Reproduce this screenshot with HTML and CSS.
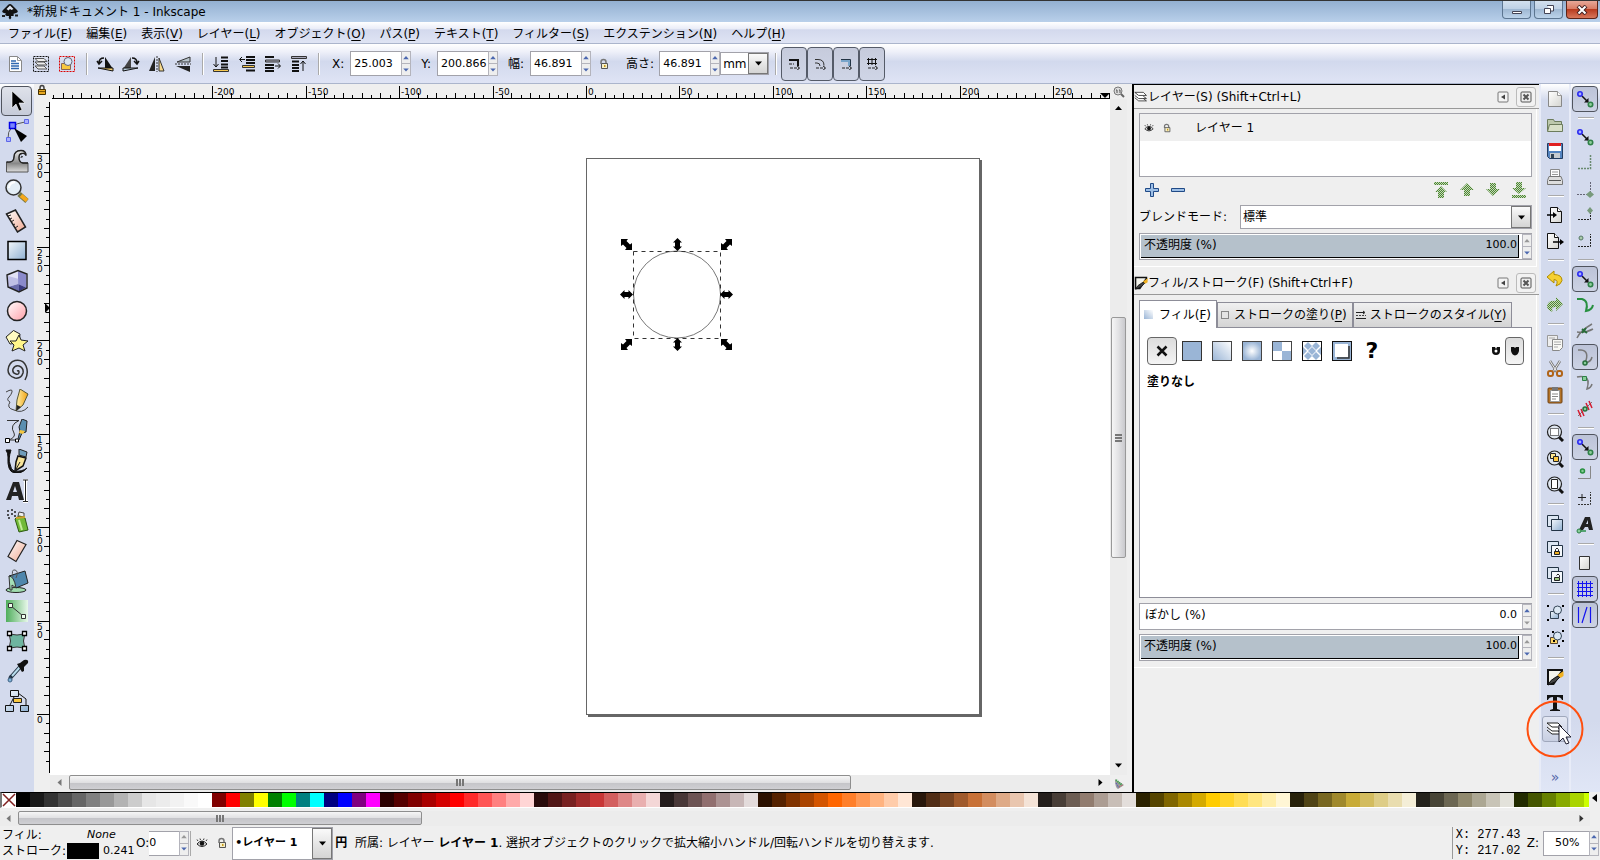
FILE: index.html
```html
<!DOCTYPE html>
<html lang="ja">
<head>
  <meta charset="UTF-8">
  <meta name="viewport" content="width=device-width, initial-scale=1.0">
  <title>*新規ドキュメント 1 - Inkscape</title>
  <link rel="stylesheet" href="styles.css">
</head>
<body>
  <!-- Shared icons and gradients -->
  <svg class="defs" width="0" height="0" aria-hidden="true">
    <defs>
      <linearGradient id="g-blue" x1="0" y1="0" x2="1" y2="1"><stop offset="0" stop-color="#f4f8fc"/><stop offset="1" stop-color="#8fb0d2"/></linearGradient>
      <linearGradient id="g-fade" x1="0" y1="1" x2="1" y2="0"><stop offset="0" stop-color="#9ab5d6"/><stop offset="1" stop-color="#fff"/></linearGradient>
      <radialGradient id="g-radial"><stop offset="0" stop-color="#fff"/><stop offset="1" stop-color="#9ab5d6"/></radialGradient>
      <linearGradient id="g-pink" x1="0" y1="0" x2="1" y2="1"><stop offset="0" stop-color="#fff"/><stop offset="1" stop-color="#ff9fa8"/></linearGradient>
      <linearGradient id="g-skin" x1="0" y1="0" x2="1" y2="1"><stop offset="0" stop-color="#fff"/><stop offset="1" stop-color="#f0a890"/></linearGradient>
      <linearGradient id="g-gray" x1="0" y1="0" x2="0" y2="1"><stop offset="0" stop-color="#eee"/><stop offset=".6" stop-color="#888"/><stop offset="1" stop-color="#ddd"/></linearGradient>
      <linearGradient id="g-green" x1="0" y1="0" x2="1" y2="0"><stop offset="0" stop-color="#4fae5c"/><stop offset="1" stop-color="#e8f8ea"/></linearGradient>
      <linearGradient id="g-page" x1="0" y1="0" x2="1" y2="1"><stop offset="0" stop-color="#fff"/><stop offset="1" stop-color="#d4d4d0"/></linearGradient>
      <linearGradient id="g-gold" x1="0" y1="0" x2="1" y2="0"><stop offset="0" stop-color="#fff3b0"/><stop offset="1" stop-color="#f0a010"/></linearGradient>
      <pattern id="p-check" width="2" height="2" patternUnits="userSpaceOnUse"><path d="M0 0h1v1H0zM1 1h1v1H1z" fill="#4e8434"/><path d="M1 0h1v1H1zM0 1h1v1H0z" fill="#c4dab8"/></pattern>
    </defs>
    <symbol id="i-eye" viewBox="0 0 12 12"><path d="M1 7q5-6 10 0q-5 5-10 0z" fill="#ddd" stroke="#222"/><circle cx="6" cy="6.500" r="2.200" fill="#111"/><path d="M2 4L1 2.500M4.500 3L4 1.500M7.500 3L8 1.500M10 4l1-1.500" stroke="#333"/></symbol>
    <symbol id="i-unlock" viewBox="0 0 12 12"><path d="M3 6V4q0-2.500 2.500-2.500T8 4v2" fill="none" stroke="#777" stroke-width="1.500"/><path d="M3.500 5.500h6v5h-6z" fill="#f6efc8" stroke="#555"/><path d="M6 7h1.500v2H6z" fill="#c79a18"/></symbol>
    <symbol id="i-lock" viewBox="0 0 12 12"><path d="M4 6V4q0-2.500 2-2.500T8 4v2" fill="none" stroke="#444" stroke-width="1.500"/><path d="M2.500 5.500h7v5h-7z" fill="#e8a820" stroke="#443000"/><path d="M3 7.500h6" stroke="#7c5500"/></symbol>
    <symbol id="i-close" viewBox="0 0 12 12"><rect x="1" y="1" width="10" height="10" rx="1" fill="#eee" stroke="#555"/><path d="M3.500 3.500l5 5m0-5l-5 5" stroke="#555" stroke-width="2"/></symbol>
    <symbol id="i-iconify" viewBox="0 0 12 12"><rect x="1" y="1" width="10" height="10" rx="1" fill="#f4f4f4" stroke="#777"/><path d="M8 3.500v5L4 6z" fill="#444"/></symbol>
    <symbol id="i-snap" viewBox="0 0 18 18"><path d="M6 6l6 6" stroke="#111" stroke-width="1.500"/><path d="M12.500 12.500H8l4.500-4.500z" fill="#111"/><circle cx="4" cy="4" r="2.200" fill="#a8b0ff" stroke="#2a2af0" stroke-width="1.600"/><circle cx="14.500" cy="14.500" r="2.200" fill="#8fcf9c" stroke="#2f8048" stroke-width="1.600"/></symbol>
    <symbol id="i-layers" viewBox="0 0 18 18"><path d="M1 3h11l4 3v7H6z" fill="#eee"/><path d="M1 10l5 4h10l-4-3M1 7l5 4h10l-4-3M1 3h11l4 4H6z" fill="#fff" stroke="#222"/></symbol>
    <symbol id="i-fillpen" viewBox="0 0 18 18"><path d="M1 1h16v3L8 17H1z" fill="#111"/><path d="M3 3h12L6 15H3z" fill="#f4f4ec"/><path d="M16 7L9 14l-7 3q2-5 8-8z" fill="#444" stroke="#111"/><path d="M17.500 3v5l-3 2-3-3z" fill="#f0b020"/></symbol>
    <symbol id="i-zoom" viewBox="0 0 18 18"><path d="M12 12l5 5" stroke="#111" stroke-width="3"/><circle cx="8.500" cy="8" r="7" fill="#dfe6ef" stroke="#222" stroke-width="1.200"/></symbol>
    <symbol id="i-up" viewBox="0 0 7 5"><path d="M3.500 0L7 4H0z"/></symbol>
    <symbol id="i-down" viewBox="0 0 7 5"><path d="M3.500 4.500L0 .5h7z"/></symbol>
  </svg>

  <header class="titlebar">
    <svg class="logo" width="18" height="16" viewBox="0 0 18 16"><path d="M9 0q1 0 2 1l5 5q2 2-1 3l-3 1q2 1 0 2h-2q1 2-1 3.500Q7 14 8 12H6q-3-1-1-2.500L3 9Q0 8 2 6l5-5q1-1 2-1z" fill="#111"/><path d="M9 1.500L12.500 5l-2 1-1.500-1-1.500 1.500-2-1.500z" fill="#dfe6f0"/><path d="M1 12h3M14 11.500h3" stroke="#222" stroke-width="2"/></svg>
    <h1>*新規ドキュメント 1 - Inkscape</h1>
    <div class="window-buttons">
      <button class="win" aria-label="最小化"><svg width="12" height="10"><path d="M1.500 6.500h9v2h-9z" fill="#fff" stroke="#445"/></svg></button>
      <button class="win" aria-label="元に戻す"><svg width="12" height="11"><path d="M4 1.500h6.500V7H8" fill="#fff" stroke="#445"/><path d="M1.500 4.500h6v5h-6z" fill="#fff" stroke="#445"/></svg></button>
      <button class="win win-close" aria-label="閉じる"><svg width="12" height="10"><path d="M2 1l8 8m0-8L2 9" stroke="#422" stroke-width="4"/><path d="M2.500 1.500l7 7m0-7l-7 7" stroke="#fff" stroke-width="2"/></svg></button>
    </div>
  </header>

  <nav class="menubar">
    <button>ファイル(<u>F</u>)</button>
    <button>編集(<u>E</u>)</button>
    <button>表示(<u>V</u>)</button>
    <button>レイヤー(<u>L</u>)</button>
    <button>オブジェクト(<u>O</u>)</button>
    <button>パス(<u>P</u>)</button>
    <button>テキスト(<u>T</u>)</button>
    <button>フィルター(<u>S</u>)</button>
    <button>エクステンション(<u>N</u>)</button>
    <button>ヘルプ(<u>H</u>)</button>
  </nav>

  <!-- Select tool options -->
  <div class="options">
    <button class="opt" aria-label="すべて選択"><svg width="18" height="18"><path d="M3.500 1.500h8l4 4v11h-12z" fill="#fff" stroke="#888"/><path d="M11.500 1.500v4h4" fill="none" stroke="#999"/><path d="M5 6h5M5 8.500h8M5 11h8M5 13.500h8" stroke="#2f68b0" stroke-width="1.500"/></svg></button>
    <button class="opt" aria-label="全レイヤー選択"><svg width="18" height="18"><rect x="1.500" y="1.500" width="15" height="15" fill="none" stroke="#111" stroke-dasharray="2 1"/><path d="M3 11l3 3h9l-3-3zM3 7l3 3h9l-3-3zM3 3.500l3 3h9l-3-3z" fill="#eee" stroke="#555"/></svg></button>
    <button class="opt" aria-label="選択解除"><svg width="18" height="18"><rect x="1.500" y="1.500" width="15" height="15" fill="none" stroke="#d00" stroke-dasharray="2 1"/><path d="M3.500 8.500h9v6h-9z" fill="#f8c840" stroke="#865"/><circle cx="10" cy="6.500" r="4" fill="#dbe6f4" stroke="#667"/></svg></button>
    <span class="vsep"></span>
    <button class="opt" aria-label="左に回転"><svg width="18" height="18"><path d="M9 2v11l8 1z" fill="#111"/><path d="M2 13h15v3z" fill="#f6d070" stroke="#111"/><path d="M8 3Q3 3 3 8M1 6l2 3 3-3" fill="none" stroke="#111" stroke-width="1.500"/></svg></button>
    <button class="opt" aria-label="右に回転"><svg width="18" height="18"><path d="M9 2v11l-8 1z" fill="#444"/><path d="M16 13H1v3z" fill="#b8ccd8" stroke="#111"/><path d="M10 3q5 0 5 5M12 6l3 3 2-3" fill="none" stroke="#111" stroke-width="1.500"/></svg></button>
    <button class="opt" aria-label="水平に反転"><svg width="18" height="18"><path d="M7 2v14H1z" fill="#222"/><path d="M11 3v13h5z" fill="#f6d88a" stroke="#333"/><path d="M9 1v16" stroke="#333" stroke-dasharray="2 1"/></svg></button>
    <button class="opt" aria-label="垂直に反転"><svg width="18" height="18"><path d="M16 2v5H3z" fill="#b8c4cc" stroke="#333"/><path d="M16 17v-6H2z" fill="#222"/><path d="M1 9h16" stroke="#333" stroke-dasharray="2 1"/></svg></button>
    <span class="vsep"></span>
    <button class="opt" aria-label="最背面へ"><svg width="18" height="18"><path d="M9 2.500h7M9 6h7M9 9.500h7M9 12.500h7" stroke="#111" stroke-width="2"/><path d="M1.500 14.500h15v2h-15z" fill="#f6c850" stroke="#333"/><path d="M4 2v10M1.500 9L4 12l2.500-3" fill="none" stroke="#111"/></svg></button>
    <button class="opt" aria-label="背面へ"><svg width="18" height="18"><path d="M8 2h9M8 5h9M8 8h9M8 15.500h9" stroke="#111" stroke-width="2"/><path d="M4.500 10.500h12v2h-12z" fill="#f6c850" stroke="#333"/><path d="M7 4.500H2M4 2L1.500 4.500 4 7" fill="none" stroke="#111"/></svg></button>
    <button class="opt" aria-label="前面へ"><svg width="18" height="18"><path d="M1 2h9M1 10h9M1 13h9M1 16h9" stroke="#111" stroke-width="2"/><path d="M1.500 5h14v2h-14z" fill="#aab" stroke="#333"/><path d="M11 11h5M14 8.500l2.500 2.500-2.500 2.500" fill="none" stroke="#111"/></svg></button>
    <button class="opt" aria-label="最前面へ"><svg width="18" height="18"><path d="M1.500 1.500h15v2h-15z" fill="#aab" stroke="#333"/><path d="M2 6.500h7M2 10h7M2 13h7M2 16h7" stroke="#111" stroke-width="2"/><path d="M13 16V6M10.500 9L13 6l2.500 3" fill="none" stroke="#111"/></svg></button>
    <span class="vsep"></span>
    <label class="lx" for="x">X:</label>
    <span class="spin"><input id="x" value="25.003"><span class="steps"><button aria-label="増"><svg><use href="#i-up"/></svg></button><button aria-label="減"><svg><use href="#i-down"/></svg></button></span></span>
    <label class="ly" for="y">Y:</label>
    <span class="spin"><input id="y" value="200.866"><span class="steps"><button aria-label="増"><svg><use href="#i-up"/></svg></button><button aria-label="減"><svg><use href="#i-down"/></svg></button></span></span>
    <label class="lw" for="w">幅:</label>
    <span class="spin"><input id="w" value="46.891"><span class="steps"><button aria-label="増"><svg><use href="#i-up"/></svg></button><button aria-label="減"><svg><use href="#i-down"/></svg></button></span></span>
    <button class="opt" aria-label="縦横比をロック"><svg width="12" height="12"><use href="#i-unlock"/></svg></button>
    <label class="lh" for="h">高さ:</label>
    <span class="spin"><input id="h" value="46.891"><span class="steps"><button aria-label="増"><svg><use href="#i-up"/></svg></button><button aria-label="減"><svg><use href="#i-down"/></svg></button></span></span>
    <span class="combo unit"><select aria-label="単位"><option>mm</option></select><span class="drop"><svg width="7" height="5"><use href="#i-down"/></svg></span></span>
    <span class="vsep"></span>
    <div class="affect">
      <button aria-label="ストローク幅を拡大縮小"><svg width="12" height="12"><path d="M1 2h9v6" fill="none" stroke="#111" stroke-width="2"/><path d="M1 6h5M2 10h9M9 8l3 2-3 2" fill="none" stroke="#222" stroke-dasharray="3 1"/></svg></button>
      <button aria-label="角の半径を拡大縮小"><svg width="12" height="12"><path d="M1 1.500h3q6 0 6 6M1 5h2q3 0 3 3" fill="none" stroke="#333"/><path d="M2 10h9M9 8l3 2-3 2" fill="none" stroke="#222" stroke-dasharray="3 1"/></svg></button>
      <button aria-label="グラデーションを変形"><svg width="12" height="12"><path d="M1 1.500h9.500V8" fill="none" stroke="#234"/><path d="M1 3h8v5" fill="none" stroke="#79a5ca" stroke-width="2"/><path d="M2 10h9M9 8l3 2-3 2" fill="none" stroke="#222" stroke-dasharray="3 1"/></svg></button>
      <button aria-label="パターンを変形"><svg width="12" height="12"><path d="M1 1.500h10M1 5.500h10M2.500 0v7M6 0v7M9.500 0v7" stroke="#111"/><path d="M2 10h9M9 8l3 2-3 2" fill="none" stroke="#222" stroke-dasharray="3 1"/></svg></button>
    </div>
  </div>

  <main class="workspace">
    <div class="toolbox">
      <button class="tool on" aria-label="選択"><svg width="24" height="24"><path d="M7 2v17l4-4 3 7 3-1-3-7h6z" fill="#000" stroke="#fff" stroke-width=".6"/></svg></button>
      <button class="tool" aria-label="ノード"><svg width="24" height="24"><path d="M3 20Q2 5 20 3" fill="none" stroke="#555"/><path d="M1.500 18.500h4v4h-4zM19.500.5h4v4h-4z" fill="#aab0ff" stroke="#5c66e8"/><path d="M4.500 3.500h6v6h-6z" fill="#7a84ff" stroke="#0000e8" stroke-width="1.500"/><path d="M9 9l13 8-6 6z" fill="#000"/></svg></button>
      <button class="tool" aria-label="微調整"><svg width="24" height="24"><path d="M1.500 23V13Q9 14 9 8q0-6.500 7-6.500 5 0 5 5-1-3-4-2-3 0-3 4 0 5 4 5.500h5V23z" fill="url(#g-gray)" stroke="#555"/><path d="M1.500 13Q9 14 9 8q0-6.500 7-6.500 5 0 5 5-1-3-4-2-3 0-3 4 0 5 4 5.500h5" fill="none" stroke="#222" stroke-width="1.300"/><path d="M18 8q-2-2-2 1" fill="none" stroke="#222"/></svg></button>
      <button class="tool" aria-label="ズーム"><svg width="24" height="24"><path d="M14 15l8 7" stroke="#774" stroke-width="5"/><path d="M16 16.500l6 5" stroke="#f5a81c" stroke-width="4"/><circle cx="8.500" cy="8.500" r="7.500" fill="#e4eef6" stroke="#333" stroke-width="1.500"/><path d="M4 9q0-5 6-6" fill="none" stroke="#fff" stroke-width="2"/></svg></button>
      <button class="tool" aria-label="計測"><svg width="24" height="24"><path d="M1.500 5l9-4 10 17-8 5z" fill="url(#g-skin)" stroke="#222" stroke-width="1.500"/><path d="M3 7l3-1M5 10l2-1M6 13l3-2M8 16l2-1M10 19l3-2" stroke="#222"/></svg></button>
      <button class="tool" aria-label="矩形"><svg width="24" height="24"><rect x="3" y="2.500" width="18" height="18" fill="url(#g-blue)" stroke="#000" stroke-width="1.500"/></svg></button>
      <button class="tool" aria-label="3Dボックス"><svg width="24" height="24"><path d="M2 6l11-4.500L22 5v14l-8 4L3 18z" fill="#c9c9ea"/><path d="M13 2v13l8 3.500V5z" fill="#8a8acb"/><path d="M3 18l10-3 8 3.500-7 4z" fill="#393a80"/><path d="M2 6l11-4.500V15L3 18z" fill="#e2e2f6"/><path d="M3 7l11 3v12L3 18z" fill="#9c9cd6" opacity=".5"/><path d="M2 6l11-4.500L22 5v14l-8 4L3 18z" fill="none" stroke="#222" stroke-width="1.400"/></svg></button>
      <button class="tool" aria-label="円"><svg width="24" height="24"><circle cx="12" cy="12" r="9.500" fill="url(#g-pink)" stroke="#222" stroke-width="1.500"/></svg></button>
      <button class="tool" aria-label="星形"><svg width="24" height="24"><path d="M8.500 1.500L15 5l-1 9-9 1-4-7z" fill="#fffbc0" stroke="#222"/><path d="M14 6l2 5 7 1-5 4 2 6-6-3-7 3 2-6-4-4h6z" fill="#fff68a" stroke="#222"/></svg></button>
      <button class="tool" aria-label="螺旋"><svg width="24" height="24"><path d="M12 12q2-1 2 1 0 3-3 2-4-1-3-5 2-4 6-3 5 2 4 7-2 6-8 5-7-2-7-8Q4 3 10 1.500 18 0 21 7q3 7-1 14" fill="none" stroke="#333" stroke-width="1.500"/></svg></button>
      <button class="tool" aria-label="鉛筆"><svg width="24" height="24"><path d="M1 3q7-4 6 0-1 3-3 5-3 3 1 5-4 6 4 8 8 4 14-3" fill="none" stroke="#444"/><path d="M15 0l8 5-5 11-7 6 1-11z" fill="url(#g-gold)" stroke="#553"/><path d="M12 16l4 2-5 4z" fill="#222"/></svg></button>
      <button class="tool" aria-label="ペン"><svg width="24" height="24"><path d="M2 1.500h12Q4 6 9 14q2 4-5 7h9" fill="none" stroke="#333"/><path d="M.5 19.500h4v4h-4zM10.500 20h3v3h-3z" fill="#fff" stroke="#000"/><path d="M17 0l5 2-1 11-4 1-3 7-1-1 2-8-1-4z" fill="#5b8fb0" stroke="#222"/><path d="M15 11l5 1-2 3-4-1z" fill="#f5c640"/></svg></button>
      <button class="tool" aria-label="カリグラフィ"><svg width="24" height="24"><path d="M1 1h5q-3 9-1 14 1 6 4 7 8 1 13-3-5 6-13 5Q2 22 3 8 3 4 1 1z" fill="#111" stroke="#111"/><path d="M14 0l8 3-1 5-7-2z" fill="#6f9cba" stroke="#222"/><path d="M13 7l8 2-3 8-8 5 1-9z" fill="#f7e49a" stroke="#111" stroke-width="1.500"/><path d="M15 13l-5 9" stroke="#222"/></svg></button>
      <button class="tool" aria-label="テキスト"><svg width="24" height="24"><path d="M1 21L8 3h6l5 18h-5l-1-4H7l-1 4zm7-8h4l-2-6z" fill="#222" fill-rule="evenodd"/><path d="M18 1h5M20.500 1v21M18 22.500h5" stroke="#fff" stroke-width="3"/><path d="M18 1h5M20.500 1v21M18 22.500h5" stroke="#222"/></svg></button>
      <button class="tool" aria-label="スプレー"><svg width="24" height="24"><path d="M2 2h2M6 1h2M9 3h2M2 6h2M6 5h2M9 7h2M3 9h2" stroke="#222" stroke-width="1.500"/><path d="M13 7l1-4 5 1v4z" fill="#eee" stroke="#444"/><path d="M10 10q4-5 10-1l3 12-9 2z" fill="#72ba38" stroke="#2c5a10"/><path d="M14 11l3 10" stroke="#c6ec9a" stroke-width="2"/><path d="M11 9l9-1" stroke="#d0a030" stroke-width="2"/></svg></button>
      <button class="tool" aria-label="消しゴム"><svg width="24" height="24"><path d="M12 1.500l9 4-10 17-8-5z" fill="url(#g-skin)" stroke="#222" stroke-width="1.200"/></svg></button>
      <button class="tool" aria-label="バケツ"><svg width="24" height="24"><ellipse cx="11" cy="21" rx="10" ry="2.500" fill="#9fdcae" stroke="#222"/><path d="M4 7l16-5 3 12-12 5z" fill="#4f86ac" stroke="#222"/><path d="M4 7q5 0 7 12l-4-3v5H5z" fill="#a4dfb6" stroke="#333"/><path d="M8 8q-2-8 2-7t1 8" fill="none" stroke="#555"/></svg></button>
      <button class="tool" aria-label="グラデーション"><svg width="24" height="24"><rect x="1" y="1" width="22" height="22" fill="url(#g-green)"/><path d="M6 7l12 10" stroke="#333"/><path d="M3.500 4.500h4v4h-4zM16.500 15.500h4v4h-4z" fill="#efe" stroke="#333"/></svg></button>
      <button class="tool" aria-label="メッシュ"><svg width="24" height="24"><path d="M4 4q8 4 16 0-3 8 0 16-8-4-16 0Q7 12 4 4z" fill="#6eb5a0" stroke="#333"/><path d="M2.500 2.500h4v4h-4zM17.500 2.500h4v4h-4zM2.500 17.500h4v4h-4zM17.500 17.500h4v4h-4z" fill="#fff" stroke="#000" stroke-width="1.300"/></svg></button>
      <button class="tool" aria-label="スポイト"><svg width="24" height="24"><path d="M15 8L7 17q-2 1-2 5" fill="none" stroke="#234" stroke-width="4"/><path d="M15 8L7 17" stroke="#b8dced" stroke-width="2"/><path d="M12 5l3-1 4-3q5-1 4 3l-4 4v4l-2 1z" fill="#111"/><circle cx="5" cy="21" r="2" fill="#7fb4d8" stroke="#468"/></svg></button>
      <button class="tool" aria-label="コネクター"><svg width="24" height="24"><path d="M9 8L4 18M13 4l8 6v8" fill="none" stroke="#111"/><path d="M5.500 1.500h8v6h-8zM.500 16.500h8v6h-8zM15.500 16.500h8v6h-8z" fill="url(#g-blue)" stroke="#111"/><path d="M8.500 9.500h8v4h-8z" fill="#f8c840" stroke="#222"/></svg></button>
    </div>

    <section class="view">
      <span class="ruler-lock"><svg width="12" height="12"><use href="#i-lock"/></svg></span>
      <svg class="ruler" id="hruler"></svg>
      <span class="corner"><svg width="12" height="12"><circle cx="5" cy="5" r="4" fill="#ddd" stroke="#777"/><path d="M8 8l3 3" stroke="#666" stroke-width="2"/><path d="M3 4h1v3M6 4h1v3" stroke="#555" fill="none"/></svg></span>
      <svg class="ruler" id="vruler"></svg>
      <svg class="canvas" id="canvas">
        <path d="M930 61h2v557H538v-2h392z" fill="#666"/>
        <rect x="536.500" y="59.500" width="393" height="556" fill="#fff" stroke="#666"/>
        <circle cx="627" cy="195.500" r="43.500" fill="none" stroke="#777"/>
        <rect x="583.500" y="152.500" width="87" height="87" fill="none" stroke="#333" stroke-dasharray="4 4"/>
      </svg>
      <div class="vscroll">
        <svg class="tip" width="7" height="5"><use href="#i-up"/></svg>
        <div class="track"><span class="thumb"><i></i><i></i><i></i></span></div>
        <svg class="tip" width="7" height="5"><use href="#i-down"/></svg>
      </div>
      <span></span>
      <div class="hscroll">
        <svg width="5" height="7"><path d="M4.500 0v7L.5 3.500z" fill="#777"/></svg>
        <div class="track"><span class="thumb"><i></i><i></i><i></i></span></div>
        <svg width="5" height="7"><path d="M.5 0v7l4-3.500z"/></svg>
      </div>
      <span class="corner"><svg width="12" height="12"><path d="M2 1l9 6-6 4q-3-1-3-10z" fill="#999"/><path d="M3 2l6 5" stroke="#3a4" stroke-width="2" stroke-dasharray="1 1"/><path d="M3 5l3 5" stroke="#44c" stroke-dasharray="1 1"/><path d="M6 9l4-2" stroke="#c55" stroke-dasharray="1 1"/></svg></span>
    </section>

    <aside class="dock">
      <section class="dialog">
        <header>
          <svg width="14" height="14"><use href="#i-layers"/></svg>
          <h2>レイヤー(S) (Shift+Ctrl+L)</h2>
          <button class="iconify" aria-label="アイコン化"><svg width="12" height="12"><use href="#i-iconify"/></svg></button>
          <button class="close" aria-label="閉じる"><svg width="12" height="12"><use href="#i-close"/></svg></button>
        </header>
        <div class="dialog-body">
          <ul class="layers">
            <li><svg width="10" height="10"><use href="#i-eye"/></svg><svg width="10" height="10"><use href="#i-unlock"/></svg><span>レイヤー 1</span></li>
          </ul>
          <div class="layer-buttons">
            <button aria-label="レイヤーを追加"><svg width="16" height="16"><path d="M6.500 1.500h3v5h5v3h-5v5h-3v-5h-5v-3h5z" fill="#9dbfe6" stroke="#204a87"/></svg></button>
            <button aria-label="レイヤーを削除"><svg width="16" height="16"><path d="M1.500 6.500h13v3h-13z" fill="#9dbfe6" stroke="#204a87"/></svg></button>
            <button class="push" aria-label="最前面へ"><svg width="16" height="16"><path d="M1 0h14v3H1zM8 4l6 6h-3v6H5v-6H2z" fill="url(#p-check)"/></svg></button>
            <button aria-label="前面へ"><svg width="16" height="16"><path d="M8 1l7 7h-4v6H5V8H1z" fill="url(#p-check)"/></svg></button>
            <button aria-label="背面へ"><svg width="16" height="16"><path d="M8 14l7-7h-4V1H5v6H1z" fill="url(#p-check)"/></svg></button>
            <button aria-label="最背面へ"><svg width="16" height="16"><path d="M1 13h14v3H1zM8 12l7-6h-4V0H5v6H1z" fill="url(#p-check)"/></svg></button>
          </div>
          <div class="blend">
            <label for="blend">ブレンドモード:</label>
            <span class="combo"><select id="blend"><option>標準</option></select><span class="drop"><svg width="7" height="5"><use href="#i-down"/></svg></span></span>
          </div>
          <div class="scale full"><div class="bar"><label for="lop">不透明度 (%)</label><input id="lop" value="100.0"></div><span class="steps"><button class="off" aria-label="増"><svg><use href="#i-up"/></svg></button><button aria-label="減"><svg><use href="#i-down"/></svg></button></span></div>
        </div>
      </section>

      <section class="dialog">
        <header>
          <svg width="14" height="14"><use href="#i-fillpen"/></svg>
          <h2>フィル/ストローク(F) (Shift+Ctrl+F)</h2>
          <button class="iconify" aria-label="アイコン化"><svg width="12" height="12"><use href="#i-iconify"/></svg></button>
          <button class="close" aria-label="閉じる"><svg width="12" height="12"><use href="#i-close"/></svg></button>
        </header>
        <div class="dialog-body">
          <div class="tabs">
            <button class="tab active"><svg width="10" height="10"><rect width="9" height="9" fill="url(#g-fade)"/></svg>フィル(<u>F</u>)</button>
            <button class="tab"><svg width="10" height="10"><rect x="1.500" y="1.500" width="7" height="7" fill="#e4e4e4" stroke="#888"/></svg>ストロークの塗り(<u>P</u>)</button>
            <button class="tab"><svg width="10" height="10"><path d="M0 2.500h8M7 1l2 1.500L7 4M0 8.500h10" stroke="#222" fill="none"/><path d="M0 5.500h10" stroke="#444" stroke-dasharray="2 1"/></svg>ストロークのスタイル(<u>Y</u>)</button>
          </div>
          <div class="notebook">
            <div class="paints">
              <button class="paint on" aria-label="塗りなし"><svg width="20" height="20"><path d="M5.500 5.500l9 9m0-9l-9 9" stroke="#111" stroke-width="2.500"/></svg></button>
              <button class="paint" aria-label="単一色"><svg width="20" height="20"><rect x=".5" y=".5" width="19" height="19" fill="#9ab5d6" stroke="#333"/></svg></button>
              <button class="paint" aria-label="線形グラデーション"><svg width="20" height="20"><rect x=".5" y=".5" width="19" height="19" fill="url(#g-fade)" stroke="#444"/></svg></button>
              <button class="paint" aria-label="放射グラデーション"><svg width="20" height="20"><rect x=".5" y=".5" width="19" height="19" fill="url(#g-radial)" stroke="#444"/></svg></button>
              <button class="paint" aria-label="メッシュグラデーション"><svg width="20" height="20"><rect x=".5" y=".5" width="19" height="19" fill="#fff" stroke="#444"/><path d="M1 1h9v9H1z" fill="#9ab5d6"/><path d="M10 10h9v9h-9z" fill="#9ab5d6"/></svg></button>
              <button class="paint" aria-label="パターン"><svg width="20" height="20"><rect x=".5" y=".5" width="19" height="19" fill="#fff" stroke="#111"/><path d="M6 1l4 4-4 4-4-4zM14 1l4 4-4 4-4-4zM10 6l4 4-4 4-4-4zM6 11l4 4-4 4-4-4zM14 11l4 4-4 4-4-4zM1 6l4 4-4 4zM19 6l-4 4 4 4z" fill="#9ab5d6"/></svg></button>
              <button class="paint" aria-label="スウォッチ"><svg width="20" height="20"><rect x=".5" y=".5" width="19" height="19" fill="#9ab5d6" stroke="#111"/><path d="M5 17h12V5" fill="none" stroke="#333" stroke-width="1.500"/><rect x="3" y="3" width="13" height="13" fill="#fff"/></svg></button>
              <button class="paint unknown" aria-label="未設定">?</button>
              <button class="rule" aria-label="奇偶規則"><svg width="10" height="10"><path d="M1 1h3l1 2 1-2h3v4q0 4-4 4T1 5z" fill="#111"/><circle cx="5" cy="5" r="1.500" fill="#fff"/></svg></button>
              <button class="rule on" aria-label="非ゼロ規則"><svg width="10" height="10"><path d="M1 1h3l1 1 1-1h3v4q-1 4-4 4.500Q2 9 1 5z" fill="#111"/></svg></button>
            </div>
            <p class="none">塗りなし</p>
          </div>
          <div class="scale"><div class="bar"><label for="blur">ぼかし (%)</label><input id="blur" value="0.0"></div><span class="steps"><button aria-label="増"><svg><use href="#i-up"/></svg></button><button class="off" aria-label="減"><svg><use href="#i-down"/></svg></button></span></div>
          <div class="scale full"><div class="bar"><label for="fop">不透明度 (%)</label><input id="fop" value="100.0"></div><span class="steps"><button class="off" aria-label="増"><svg><use href="#i-up"/></svg></button><button aria-label="減"><svg><use href="#i-down"/></svg></button></span></div>
        </div>
      </section>
    </aside>

    <!-- Commands -->
    <div class="bar-v">
      <button class="cmd" aria-label="新規"><svg width="18" height="18"><path d="M2.500 1.500h9l4 4v11h-13z" fill="url(#g-page)" stroke="#888"/><path d="M11.500 1.500v4h4" fill="#fff" stroke="#999"/></svg></button>
      <button class="cmd" aria-label="開く"><svg width="18" height="18"><path d="M1.500 15V3.500h6l1 2h7v3" fill="#bcc8ac" stroke="#6c7c5c"/><path d="M1.500 15.500l2-7h13v7z" fill="#d8e0c8" stroke="#6c7c5c"/></svg></button>
      <button class="cmd" aria-label="保存"><svg width="18" height="18"><path d="M1.500 1.500h15v15h-13l-2-2z" fill="#5484c0" stroke="#223c60"/><path d="M3 1h12v8H3z" fill="#fff"/><path d="M3 1h12v3H3z" fill="#e02020"/><path d="M4 11h10v5H4z" fill="#c8ccd0"/><path d="M5 12h3v4H5z" fill="#345"/></svg></button>
      <button class="cmd" aria-label="印刷"><svg width="18" height="18"><path d="M4.500 9V1.500h9V9" fill="#fff" stroke="#888"/><path d="M6 4h6M6 6.500h6" stroke="#999"/><path d="M3 8.500h12l1.500 4v4h-15v-4z" fill="#ddd" stroke="#777"/><path d="M3 12.500h12" stroke="#555"/></svg></button>
      <hr>
      <button class="cmd" aria-label="インポート"><svg width="18" height="18"><path d="M4.500 1.500h7l4 4v11h-11z" fill="url(#g-page)" stroke="#111"/><path d="M11.500 1.500v4h4" fill="#fff" stroke="#111"/><path d="M1 9h7" stroke="#000" stroke-width="1.500"/><path d="M7 6l4 3-4 3z"/></svg></button>
      <button class="cmd" aria-label="エクスポート"><svg width="18" height="18"><path d="M1.500 1.500h7l4 4v11h-11z" fill="url(#g-page)" stroke="#111"/><path d="M8.500 1.500v4h4" fill="#fff" stroke="#111"/><path d="M7 10h8" stroke="#000" stroke-width="1.500"/><path d="M14 7l4 3-4 3z"/></svg></button>
      <hr>
      <button class="cmd" aria-label="元に戻す"><svg width="18" height="18"><path d="M1 7l7-6v3.500q8 0 8 6-1 4-6 5.500 3-6-2-6.500V13z" fill="#f6d030" stroke="#b08c00"/></svg></button>
      <button class="cmd" aria-label="やり直す"><svg width="18" height="18"><path d="M17 8l-7-7v4Q2 4 1 10q0 4 6 6-3-5 3-5v4z" fill="url(#p-check)"/></svg></button>
      <hr>
      <button class="cmd" aria-label="コピー"><svg width="18" height="18"><path d="M1.500 1.500h10v11h-10z" fill="#eee" stroke="#999"/><path d="M6.500 5.500h10v8l-3 3h-7z" fill="#f8f8f4" stroke="#888"/><path d="M3 4h6M8 8h7M8 10.500h7M8 13h4" stroke="#aaa"/></svg></button>
      <button class="cmd" aria-label="切り取り"><svg width="18" height="18"><path d="M4 1l7 11M14 1L7 12" stroke="#777" stroke-width="2.500"/><path d="M4 1l7 11M14 1L7 12" stroke="#eee"/><rect x="2" y="11" width="5" height="5" rx="2" fill="none" stroke="#b06418" stroke-width="2"/><rect x="11" y="11" width="5" height="5" rx="2" fill="none" stroke="#b06418" stroke-width="2"/></svg></button>
      <button class="cmd" aria-label="貼り付け"><svg width="18" height="18"><rect x="2" y="2" width="14" height="15" rx="1" fill="#b47428" stroke="#704010"/><path d="M4.500 4.500h9v11h-9z" fill="#fff" stroke="#999"/><path d="M6 1h6v4H6z" fill="#777"/><path d="M6 8h6M6 10.500h6M6 13h4" stroke="#888"/></svg></button>
      <hr>
      <button class="cmd" aria-label="選択範囲にズーム"><svg width="18" height="18"><use href="#i-zoom"/><rect x="4.500" y="4.500" width="8" height="7" fill="#fff" stroke="#000" stroke-dasharray="1 1"/></svg></button>
      <button class="cmd" aria-label="描画全体にズーム"><svg width="18" height="18"><use href="#i-zoom"/><path d="M4.500 3.500h5v5h-5z" fill="#ffe890" stroke="#222"/><path d="M7.500 6.500h5v5h-5z" fill="#ffc840" stroke="#222"/></svg></button>
      <button class="cmd" aria-label="ページにズーム"><svg width="18" height="18"><use href="#i-zoom"/><path d="M5.500 3.500h6v9h-6z" fill="#fff" stroke="#222"/></svg></button>
      <hr>
      <button class="cmd" aria-label="複製"><svg width="18" height="18"><path d="M1.500 1.500h11v11h-11z" fill="#dce6f2" stroke="#234"/><path d="M5.500 5.500h11v11h-11z" fill="url(#g-blue)" stroke="#234"/></svg></button>
      <button class="cmd" aria-label="クローン"><svg width="18" height="18"><path d="M1.500 1.500h11v11h-11z" fill="#dce6f2" stroke="#234"/><path d="M5.500 5.500h11v11h-11z" fill="#f4f8fc" stroke="#234"/><path d="M9.500 11V9.500q1.500-3 3 0V11" fill="none" stroke="#222"/><path d="M8.500 11.500h5v3h-5z" fill="#f0b020" stroke="#222"/></svg></button>
      <button class="cmd" aria-label="クローンを解除"><svg width="18" height="18"><path d="M1.500 1.500h11v11h-11z" fill="#dce6f2" stroke="#234"/><path d="M5.500 5.500h11v11h-11z" fill="#f4f8fc" stroke="#234"/><path d="M10.500 9.500q1.500-3 3 0V11" fill="none" stroke="#222"/><path d="M8.500 11.500h5v3h-5z" fill="#9cc880" stroke="#222"/></svg></button>
      <hr>
      <button class="cmd" aria-label="グループ化"><svg width="18" height="18"><path d="M4.500 7.500h8v7h-8z" fill="url(#g-blue)" stroke="#345"/><circle cx="11.500" cy="6" r="4" fill="#dce8f4" stroke="#345"/><path d="M1 1h2v2H1zM16 1h2v2h-2zM1 15h2v2H1zM16 15h2v2h-2z"/></svg></button>
      <button class="cmd" aria-label="グループ解除"><svg width="18" height="18"><path d="M4.500 7.500h7v6h-7z" fill="#ffd868" stroke="#543"/><circle cx="11.500" cy="6" r="4" fill="#dce8f4" stroke="#345"/><path d="M1 5h2v2H1zM6 1h2v2H6zM16 0h2v2h-2zM1 15h2v2H1zM12 15h2v2h-2zM16 10h2v2h-2zM7 10h2v2H7z"/></svg></button>
      <hr>
      <button class="cmd" aria-label="フィル/ストローク"><svg width="18" height="18"><use href="#i-fillpen"/></svg></button>
      <button class="cmd" aria-label="テキスト"><svg width="18" height="18"><path d="M1 1h16v5h-1q-1-3-5-3v12l3 1v1H4v-1l3-1V3Q3 3 2 6H1z" fill="#111"/></svg></button>
      <button class="cmd hover" aria-label="レイヤー"><svg width="18" height="18"><use href="#i-layers"/></svg>
        <svg class="ring" width="58" height="58"><circle cx="29" cy="29" r="27.500" fill="none" stroke="#ff4f0f" stroke-width="2"/><path d="M33 25v17l4-4 3 6 3-1-3-6h5z" fill="#fff" stroke="#223"/></svg>
      </button>
      <button class="cmd more" aria-label="その他">»</button>
    </div>

    <!-- Snap controls -->
    <div class="bar-v snapbar">
      <button class="cmd on" aria-label="スナップ"><svg width="18" height="18"><use href="#i-snap"/></svg></button>
      <hr>
      <button class="cmd" aria-label="境界枠"><svg width="18" height="18"><use href="#i-snap"/></svg></button>
      <button class="cmd" aria-label="境界枠の辺"><svg width="18" height="18"><path d="M2 14.500h12.500V1" fill="none" stroke="#6a8a70" stroke-width="1.500" stroke-dasharray="2 1"/></svg></button>
      <button class="cmd" aria-label="境界枠の角"><svg width="18" height="18"><path d="M1 14.500h13.500V1" fill="none" stroke="#667" stroke-dasharray="2 1"/><path d="M14 11l4 3.500-4 3.500-4-3.500z" fill="#789a7c"/></svg></button>
      <button class="cmd" aria-label="辺の中点"><svg width="18" height="18"><path d="M2 13.500h12.500V7" fill="none" stroke="#222" stroke-dasharray="2 1"/><path d="M14 1l3 3.500L14 8l-3-3.500z" fill="#789a7c"/></svg></button>
      <button class="cmd" aria-label="境界枠の中心"><svg width="18" height="18"><path d="M2 14.500h12.500V2" fill="none" stroke="#222" stroke-dasharray="2 1"/><circle cx="5" cy="6" r="2" fill="#aca" stroke="#576"/></svg></button>
      <hr>
      <button class="cmd on" aria-label="ノードにスナップ"><svg width="18" height="18"><use href="#i-snap"/></svg></button>
      <button class="cmd" aria-label="パス"><svg width="18" height="18"><path d="M1 3h5q7 2 4 12 6-1 7-6" fill="none" stroke="#279040" stroke-width="2"/></svg></button>
      <button class="cmd" aria-label="パスの交差"><svg width="18" height="18"><path d="M1 16q3-7 15-14M1 10q9 1 16-3" fill="none" stroke="#777" stroke-width="1.500"/><path d="M6 7l5 4M6 11l4-5" stroke="#286c38" stroke-width="2"/></svg></button>
      <button class="cmd on" aria-label="シャープノード"><svg width="18" height="18"><path d="M2 2h3q9 1 4 13 6-1 7-6" fill="none" stroke="#777" stroke-width="1.500"/><circle cx="9" cy="15" r="2" fill="#8c9" stroke="#28703c" stroke-width="1.500"/></svg></button>
      <button class="cmd" aria-label="スムーズノード"><svg width="18" height="18"><path d="M1 3q4-1 8 0 5 2 2 12 4-1 5-5" fill="none" stroke="#777" stroke-width="1.500"/><path d="M6.500 2.500h4v4h-4z" fill="#8c9" stroke="#2f8048"/></svg></button>
      <button class="cmd" aria-label="線の中点"><svg width="18" height="18"><path d="M2 16L16 2" stroke="#777"/><path d="M2 10l3 7M5 9l3 7M10 3l3 7M13 1l3 7" stroke="#d41c30" stroke-width="1.500"/><circle cx="9" cy="9" r="2" fill="#8c9" stroke="#28703c" stroke-width="1.500"/></svg></button>
      <hr>
      <button class="cmd on" aria-label="その他の点"><svg width="18" height="18"><use href="#i-snap"/></svg></button>
      <button class="cmd" aria-label="オブジェクトの中心"><svg width="18" height="18"><path d="M2 14.500h12.500V2" fill="none" stroke="#888"/><circle cx="6.500" cy="7" r="2" fill="#8c9" stroke="#279040" stroke-width="1.500"/></svg></button>
      <button class="cmd" aria-label="回転中心"><svg width="18" height="18"><path d="M2 14.500h12.500V2" fill="none" stroke="#333" stroke-dasharray="2 1"/><path d="M2 7.500h8M6 4v7" stroke="#222"/></svg></button>
      <button class="cmd" aria-label="テキストベースライン"><svg width="18" height="18"><path d="M3 14L9 1h5l3 13h-4l-1-3H9l-2 3zm7-6h2V4z" fill="#222" fill-rule="evenodd"/><path d="M3 15h7" stroke="#2a9048" stroke-width="1.500"/><circle cx="3" cy="15" r="2" fill="#8c9" stroke="#2a8044"/></svg></button>
      <hr>
      <button class="cmd" aria-label="ページ境界"><svg width="18" height="18"><path d="M3.500 2.500h10v13h-10z" fill="url(#g-page)" stroke="#333"/></svg></button>
      <button class="cmd on" aria-label="グリッド"><svg width="18" height="18"><path d="M1 3.500h16M1 7.500h16M1 11.500h16M1 15.500h16M2.500 1v16M6.500 1v16M10.500 1v16M14.500 1v16" stroke="#1414f0"/></svg></button>
      <button class="cmd on" aria-label="ガイド"><svg width="18" height="18"><path d="M2.500 1v16M14.500 1v16M6 17l5-16" stroke="#1414f0" stroke-width="1.200"/></svg></button>
    </div>
  </main>

  <!-- Colour palette -->
  <div class="palette">
    <div class="swatches" id="swatches">
      <button class="swatch none-swatch" aria-label="なし"><svg width="14" height="14"><path d="M1 1l12 12M13 1L1 13" stroke="#802020" stroke-width="1.500"/></svg></button>
    </div>
    <button class="palette-menu" aria-label="パレット"><svg width="5" height="8"><path d="M5 0v8L0 4z"/></svg></button>
  </div>
  <div class="hscroll palette-scroll">
    <svg width="5" height="7"><path d="M4.500 0v7L.5 3.500z" fill="#777"/></svg>
    <div class="track"><span class="thumb"><i></i><i></i><i></i></span></div>
    <svg width="5" height="7"><path d="M.5 0v7l4-3.500z" fill="#333"/></svg>
  </div>

  <footer class="status">
    <dl class="style">
      <dt>フィル:</dt><dd><em>None</em></dd>
      <dt>ストローク:</dt><dd><span class="stroke-color"></span>0.241</dd>
    </dl>
    <label for="o">O:</label>
    <span class="spin opacity"><input id="o" value="0"><span class="steps"><button class="off" aria-label="増"><svg><use href="#i-up"/></svg></button><button aria-label="減"><svg><use href="#i-down"/></svg></button></span></span>
    <button class="opt" aria-label="表示"><svg width="12" height="12"><use href="#i-eye"/></svg></button>
    <button class="opt" aria-label="ロック"><svg width="12" height="12"><use href="#i-unlock"/></svg></button>
    <span class="combo current"><select aria-label="現在のレイヤー"><option>•レイヤー 1</option></select><span class="drop"><svg width="7" height="5"><use href="#i-down"/></svg></span></span>
    <p class="message"><b>円</b>&nbsp; 所属: レイヤー <b>レイヤー 1</b>. 選択オブジェクトのクリックで拡大縮小ハンドル/回転ハンドルを切り替えます.</p>
    <div class="coords"><span>X: 277.43</span><span>Y: 217.02</span></div>
    <label class="lz" for="z">Z:</label>
    <span class="spin zoom"><input id="z" value="50%"><span class="steps"><button aria-label="増"><svg><use href="#i-up"/></svg></button><button aria-label="減"><svg><use href="#i-down"/></svg></button></span></span>
  </footer>

  <script src="script.js"></script>
</body>
</html>
```
FILE: styles.css
```css
* {
  box-sizing: border-box;
}
body {
  margin: 0;
  height: 100vh;
  display: flex;
  flex-direction: column;
  overflow: hidden;
  background: #efefef;
  color: #000;
  font: 12px/16px "DejaVu Sans", "Noto Sans CJK JP", sans-serif;
}
h1, h2, p, ul, dl, dd {
  margin: 0;
  padding: 0;
  font-size: 12px;
  font-weight: normal;
}
button, input, select {
  margin: 0;
  padding: 0;
  border: 0;
  border-radius: 0;
  background: none;
  color: inherit;
  font: inherit;
}
svg {
  display: block;
  flex: none;
}
.defs {
  position: absolute;
}
u {
  text-underline-offset: 2px;
}

/* title and menu */
.titlebar {
  display: flex;
  align-items: center;
  height: 22px;
  padding-left: 1px;
  border-top: 1px solid #333;
  background: linear-gradient(#93b0d1, #b9d0ea);
}
.titlebar h1 {
  flex: 1;
  padding-left: 8px;
}
.window-buttons {
  display: flex;
  align-self: flex-start;
  gap: 3px;
  padding-right: 2px;
}
.win {
  display: grid;
  place-items: center;
  width: 29px;
  height: 18px;
  border: 1px solid #5c7590;
  border-top: 0;
  border-radius: 0 0 4px 4px;
  background: linear-gradient(#d3e0ee, #bccfe4 50%, #9fb8d3 50%, #bcd3ea);
}
.win-close {
  width: 32px;
  border-color: #5c2418;
  background: linear-gradient(#e8a898, #d87860 50%, #b83c20 50%, #d8785c);
}
.menubar {
  display: flex;
  height: 22px;
  padding: 2px 0 0 1px;
  border-bottom: 1px solid #abb5cc;
  background: linear-gradient(#fff, #e8ebf7 35%, #d3d9ed 36%, #dfe4f4);
}
.menubar button {
  padding: 0 7px;
}

/* select tool options */
.options {
  display: flex;
  align-items: center;
  height: 40px;
  padding-left: 2px;
  border-bottom: 1px solid #abb5cc;
  background: linear-gradient(#fff, #eef0f9 20%, #d2d9ed 45%, #dfe4f5);
}
.opt {
  display: grid;
  place-items: center;
  width: 26px;
  height: 26px;
}
.vsep {
  width: 2px;
  height: 22px;
  margin: 0 4px 0 6px;
  border-left: 1px solid #aaa;
  background: #fff;
}
.lx { margin: 0 6px 0 8px; }
.ly { margin: 0 6px 0 10px; }
.lw { margin: 0 6px 0 10px; }
.lh { margin: 0 5px 0 9px; }
.spin {
  display: flex;
  height: 25px;
}
.spin input {
  width: 51px;
  padding-left: 3px;
  border: 1px solid #a2a2aa;
  border-right: 0;
  background: #fff;
  font-size: 11px;
}
.steps {
  display: flex;
  flex-direction: column;
  width: 10px;
  border: 1px solid #b4b4bc;
  background: #eee;
}
.steps button {
  flex: 1;
  display: grid;
  place-items: center;
  fill: #4c68b0;
}
.steps button + button {
  border-top: 1px solid #b4b4bc;
}
.steps .off {
  fill: #999;
}
.steps svg {
  width: 6px;
  height: 4px;
}
.combo {
  display: flex;
  border: 1px solid #a2a2aa;
  background: #fff;
}
.combo select {
  flex: 1;
  min-width: 0;
  padding-left: 2px;
  appearance: none;
}
.drop {
  display: grid;
  place-items: center;
  width: 20px;
  border: 1px solid #777;
  background: linear-gradient(#fafafa, #e6e6e6 50%, #d4d4d4);
}
.unit {
  width: 49px;
  height: 23px;
}
.affect {
  display: flex;
}
.affect button {
  display: grid;
  place-items: center;
  width: 26px;
  height: 34px;
  border: 1px solid #555b68;
  border-radius: 4px;
  background: linear-gradient(#c6cbdc, #cfd5e6);
}

/* workspace */
.workspace {
  flex: 1;
  min-height: 0;
  display: flex;
}
.toolbox {
  width: 34px;
  padding: 2px 2px 0 1px;
  background: linear-gradient(#fff, #d3daed 16px);
}
.tool {
  display: grid;
  place-items: center;
  width: 31px;
  height: 30px;
}
.tool.on {
  border: 1px solid #50545e;
  border-radius: 4px;
  background: linear-gradient(#dfe2ea, #c6cbd9);
}
.view {
  flex: 1;
  min-width: 0;
  display: grid;
  grid-template-columns: 16px 1fr 22px;
  grid-template-rows: 15px 1fr 17px;
}
.ruler {
  width: 100%;
  height: 100%;
  font-size: 9px;
}
.ruler-lock {
  padding-left: 2px;
}
.corner {
  display: grid;
  place-items: center;
  padding-right: 5px;
}
.canvas {
  width: 100%;
  height: 100%;
  background: #fff;
}
.vscroll {
  display: flex;
  flex-direction: column;
  align-items: center;
  justify-content: space-between;
  margin-right: 5px;
  padding: 7px 0;
  background: #ececec;
}
.vscroll .track {
  flex: 1;
  width: 15px;
}
.vscroll .thumb {
  display: flex;
  flex-direction: column;
  align-items: center;
  justify-content: center;
  height: 37%;
  margin-top: 206px;
  gap: 1px;
  border: 1px solid #999;
  border-radius: 2px;
  background: linear-gradient(90deg, #f6f6f6, #e2e2e4 50%, #c9c9cd);
}
.vscroll i {
  width: 7px;
  height: 2px;
  background: #777;
}
.hscroll {
  display: flex;
  align-items: center;
  gap: 7px;
  padding: 0 7px 2px;
  background: #ececec;
}
.hscroll .track {
  flex: 1;
}
.hscroll .thumb {
  display: flex;
  align-items: center;
  justify-content: center;
  width: 76.5%;
  height: 15px;
  gap: 1px;
  border: 1px solid #8e8e8e;
  border-radius: 2px;
  background: linear-gradient(#f6f6f6, #e0e0e2 50%, #c4c4c8 52%, #cfcfd3);
}
.hscroll i {
  width: 2px;
  height: 7px;
  background: #777;
}

/* dock */
.dock {
  width: 407px;
  border-top: 1px solid #000;
  border-left: 2px solid #000;
}
.dialog header {
  display: flex;
  align-items: center;
  height: 24px;
  border-bottom: 1px solid #999;
}
.dialog + .dialog {
  margin-top: 4px;
}
.dialog h2 {
  flex: 1;
}
.iconify {
  margin-right: 7px;
}
.close {
  display: grid;
  place-items: center;
  width: 20px;
  height: 20px;
  margin-right: 3px;
  border: 1px solid #bbb;
  border-radius: 3px;
  background: #f2f2f2;
}
.dialog-body {
  margin-right: 2px;
  padding: 4px 4px 6px 5px;
  border-right: 1px solid #fff;
  border-bottom: 1px solid #fff;
}
.layers {
  height: 64px;
  border: 1px solid #a2a2aa;
  background: #fff;
  list-style: none;
}
.layers li {
  display: flex;
  align-items: center;
  gap: 8px;
  height: 27px;
  padding-left: 4px;
  background: #efefef;
}
.layers span {
  padding-left: 15px;
}
.layer-buttons {
  display: flex;
  align-items: center;
  height: 28px;
  gap: 10px;
  padding: 0 5px 2px;
}
.push {
  margin-left: auto;
}
.blend {
  display: flex;
  align-items: center;
  justify-content: space-between;
  margin-bottom: 4px;
}
.blend .combo {
  width: 292px;
  height: 24px;
}
.scale {
  display: flex;
  height: 27px;
  border: 1px solid #a2a2aa;
  border-right: 0;
  background: #fff;
}
.scale + .scale {
  margin-top: 4px;
}
.bar {
  flex: 1;
  display: flex;
  align-items: center;
  justify-content: space-between;
  margin: 1px 3px 1px 1px;
  padding: 0 2px 3px 4px;
}
.bar input {
  width: 60px;
  font-size: 11px;
  text-align: right;
}
.full .bar {
  padding: 0 1px 2px 3px;
  border-right: 1px solid #000;
  border-bottom: 1px solid #000;
  background: #b5c1cb;
}
.tabs {
  display: flex;
  align-items: flex-end;
  height: 28px;
}
.tab {
  display: flex;
  align-items: center;
  height: 25px;
  padding: 0 5px 0 2px;
  border: 1px solid #8d8d98;
  border-bottom: 0;
  background: linear-gradient(#f0f0f0, #d4d4d4);
}
.tab svg {
  margin-right: 4px;
}
.tab.active {
  position: relative;
  height: 28px;
  padding: 0 5px 0 4px;
  margin-bottom: -1px;
  background: #fff;
}
.tab.active svg {
  margin-right: 5px;
}
.notebook {
  height: 271px;
  margin-bottom: 5px;
  padding: 9px 7px;
  border: 1px solid #8d8d98;
  background: #fff;
}
.paints {
  display: flex;
  align-items: center;
}
.paint {
  display: grid;
  place-items: center;
  width: 30px;
  height: 28px;
}
.paint.on, .rule.on {
  border: 1px solid #666;
  border-radius: 4px;
  background: linear-gradient(#dcdcdc, #f4f4f4);
}
.unknown {
  font-size: 22px;
  font-weight: bold;
}
.rule {
  display: grid;
  place-items: center;
  width: 19px;
  height: 28px;
}
.unknown + .rule {
  margin-left: auto;
}
.none {
  margin-top: 9px;
  font-weight: bold;
}

/* right-hand bars */
.bar-v {
  width: 30px;
  padding: 2px 0 0 1px;
  border-left: 2px solid #e8ecf8;
  background: linear-gradient(#fff, #d3daed 16px, #d3daed 90%, #e0e6f6);
}
.snapbar {
  width: 31px;
}
.bar-v hr {
  width: 16px;
  height: 2px;
  margin: 5px auto;
  border: 0;
  border-top: 1px solid #aaa;
  background: #fff;
}
.cmd {
  position: relative;
  display: grid;
  place-items: center;
  width: 26px;
  height: 26px;
}
.cmd.on {
  border: 1px solid #50545e;
  border-radius: 4px;
  background: linear-gradient(#bcc3d8, #ccd2e4);
}
.cmd.hover {
  border: 1px solid #a0a8bc;
  border-radius: 3px;
  background: linear-gradient(#e4e8f4, #c8cfe2);
}
.ring {
  position: absolute;
  top: -17px;
  left: -17px;
  z-index: 2;
}
.more {
  margin-top: 22px;
  color: #5566aa;
  font-size: 14px;
}

/* palette and status */
.palette {
  display: flex;
  height: 19px;
}
.swatches {
  flex: 1;
  display: flex;
  height: 16px;
  overflow: hidden;
  border-top: 1px solid #000;
  border-left: 2px solid #777;
  border-bottom: 1px solid #fff;
}
.swatch {
  flex: none;
  width: 14px;
  height: 14px;
}
.none-swatch {
  background: #fff;
}
.palette-menu {
  align-self: flex-start;
  width: 11px;
  padding: 2px 3px;
}
.palette-scroll {
  height: 15px;
  margin-right: 10px;
  padding: 0 6px 1px;
}
.palette-scroll .thumb {
  width: 26%;
  height: 14px;
}
.status {
  display: flex;
  align-items: center;
  height: 34px;
}
.style {
  display: grid;
  grid-template-columns: 65px 69px;
  padding-left: 2px;
}
.style dt {
  white-space: nowrap;
}
.style dd {
  display: flex;
  gap: 4px;
  font-size: 11px;
}
.style em {
  padding-left: 20px;
}
.stroke-color {
  width: 32px;
  background: #000;
}
.opacity {
  margin-right: 1px;
  padding-right: 1px;
  border-right: 1px solid #aaa;
}
.opacity input {
  width: 30px;
  padding: 0;
  border-left: 0;
}
.status .opt {
  width: 20px;
}
.current {
  width: 101px;
  height: 33px;
  font-size: 11px;
  font-weight: bold;
}
.message {
  flex: 1;
  padding-left: 2px;
  white-space: nowrap;
}
.coords {
  display: flex;
  flex-direction: column;
  width: 75px;
  padding-left: 3px;
  border-left: 1px solid #999;
  font-family: "Liberation Mono", monospace;
}
.lz {
  padding-right: 4px;
}
.zoom {
  padding-right: 1px;
}
.zoom input {
  width: 46px;
  padding-left: 11px;
}
```
FILE: script.js
```js
const NS = 'http://www.w3.org/2000/svg';
const hruler = document.getElementById('hruler');
const vruler = document.getElementById('vruler');
const canvas = document.getElementById('canvas');

function add(parent, tag, attrs, text) {
  const el = document.createElementNS(NS, tag);
  for (const key in attrs) el.setAttribute(key, attrs[key]);
  if (text) el.textContent = text;
  parent.appendChild(el);
}

// rulers: one small tick every 5mm, one long tick with a label every 50mm
const SCALE = 1.869;

function tickSize(mm) {
  if (mm % 50 === 0) return 12;
  return mm % 10 === 0 ? 5 : 3;
}

for (let mm = -285; mm <= 280; mm += 5) {
  const x = Math.round(536 + mm * SCALE);
  const size = tickSize(mm);
  add(hruler, 'path', { d: `M${x + 0.5} ${14 - size}v${size}`, stroke: '#000' });
  if (mm % 50 === 0) add(hruler, 'text', { x: x + 2, y: 11 }, String(mm));
}
add(hruler, 'path', { d: 'M2 14.5H1060', stroke: '#000' });
add(hruler, 'path', { d: 'M1050 9h10l-5 5z' });

for (let mm = -25; mm <= 325; mm += 5) {
  const y = Math.round(615 - mm * SCALE);
  const size = tickSize(mm);
  add(vruler, 'path', { d: `M${15 - size} ${y + 0.5}h${size}`, stroke: '#000' });
  if (mm % 50 === 0) {
    String(mm).split('').forEach((digit, i) => {
      add(vruler, 'text', { x: 3, y: y + 9 + i * 8 }, digit);
    });
  }
}
add(vruler, 'path', { d: 'M15.5 3V674', stroke: '#000' });
add(vruler, 'path', { d: 'M11 204v10l5-5z' });

// selection handles: x, y, rotation, shape
const SIDE = 'M-6.5 0L-2 -4.5V-2.5H2V-4.5L6.5 0L2 4.5V2.5H-2V4.5Z';
const CORNER = 'M-5.5 -5.5H1.5L0 -3.5L3.5 0L5.5 -1.5V5.5H-1.5L0 3.5L-3.5 0L-5.5 1.5Z';
const handles = [
  [576.5, 145.5, 0, CORNER], [627.5, 145.5, 90, SIDE], [676.5, 145.5, 90, CORNER],
  [576.5, 195.5, 0, SIDE], [676.5, 195.5, 0, SIDE],
  [576.5, 245.5, 90, CORNER], [627.5, 245.5, 90, SIDE], [676.5, 245.5, 0, CORNER]
];
handles.forEach(([x, y, r, shape]) => {
  add(canvas, 'path', { d: shape, transform: `translate(${x} ${y}) rotate(${r})` });
});

// palette
const colors = `000000 1a1a1a 333333 4d4d4d 666666 808080 999999 b3b3b3 cccccc e6e6e6 ececec f2f2f2 f9f9f9 ffffff
800000 ff0000 808000 ffff00 008000 00ff00 008080 00ffff 000080 0000ff 800080 ff00ff
2b0000 550000 800000 aa0000 d40000 ff0000 ff2a2a ff5555 ff8080 ffaaaa ffd5d5
280b0b 501616 782121 a02c2c c83737 d35f5f de8787 e9afaf f4d7d7
241c1c 483737 6c5353 916f6f ac9393 c8b7b7 e3dbdb
2b1100 552200 803300 aa4400 d45500 ff6600 ff7f2a ff9955 ffb380 ffccaa ffe6d5
28170b 502d16 784421 a05a2c c87137 d38d5f deaa87 e9c6af f4e3d7
241f1c 483e37 6c5d53 917c6f ac9d93 c8beb7 e3dedb
2b2200 554400 806600 aa8800 d4aa00 ffcc00 ffd42a ffdd55 ffe680 ffeeaa fff6d5
28220b 504416 786721 a0892c c8ab37 d3bc5f decd87 e9ddaf f4eed7
24221c 484537 6c6753 918a6f aca793 c8c4b7 e3e2db
222b00 445500 668000 88aa00 aad400 ccff00`.split(/\s+/);

const swatches = document.getElementById('swatches');
colors.forEach(color => {
  const swatch = document.createElement('button');
  swatch.className = 'swatch';
  swatch.style.background = '#' + color;
  swatch.setAttribute('aria-label', '#' + color);
  swatches.appendChild(swatch);
});
```
